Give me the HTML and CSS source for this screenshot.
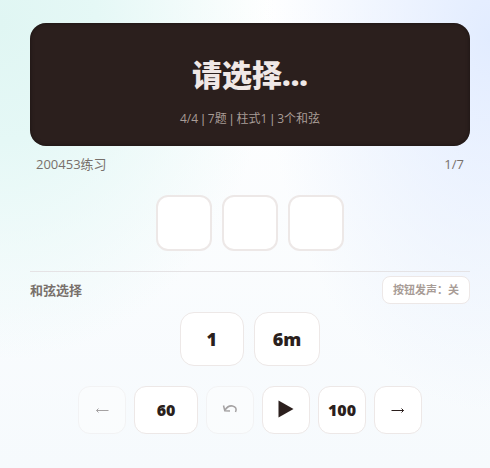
FILE: index.html
```html
<!DOCTYPE html>
<html lang="zh-CN">
<head>
    <meta charset="UTF-8">
    <meta name="viewport" content="width=device-width, initial-scale=1.0">
    <title>和弦练习</title>
    <link rel="stylesheet" href="styles.css">
</head>
<body>
    <main class="container">
        <header class="screen">
            <h1>请选择...</h1>
            <p>4/4<span class="sep"> | </span>7题<span class="sep"> | </span>柱式1<span class="sep"> | </span>3个和弦</p>
        </header>

        <div class="status">
            <span>200453练习</span>
            <span>1/7</span>
        </div>

        <!-- Answer slots -->
        <div class="slots">
            <div class="slot"></div>
            <div class="slot"></div>
            <div class="slot"></div>
        </div>

        <section class="picker">
            <div class="picker-header">
                <h2>和弦选择</h2>
                <button type="button" class="sound-toggle">按钮发声：关</button>
            </div>
            <div class="chords">
                <button type="button" class="chord">1</button>
                <button type="button" class="chord">6m</button>
            </div>
        </section>

        <div class="controls">
            <button type="button" class="control" aria-label="上一题" disabled>
                <svg width="14" height="8" viewBox="0 0 14 8"><path d="M13.500 4.500H1.500M3.500 2.500L1.500 4.500L3.500 6.500" fill="none" stroke="currentColor"/></svg>
            </button>
            <button type="button" class="control wide">60</button>
            <button type="button" class="control undo" aria-label="撤销" disabled>
                <svg width="16" height="10" viewBox="0 0 16 10"><path d="M3 6C5 3 8 1.500 10.500 2C14 2.700 14.800 5 13.500 8" fill="none" stroke="currentColor" stroke-width="1.500"/><path d="M1.500 1.500L2.800 6.700L8 7" fill="none" stroke="currentColor" stroke-width="1.500"/></svg>
            </button>
            <button type="button" class="control play" aria-label="播放">
                <svg width="16" height="18" viewBox="0 0 16 18"><path d="M0.500 0.500L15.500 9L0.500 17.500Z" fill="currentColor"/></svg>
            </button>
            <button type="button" class="control">100</button>
            <button type="button" class="control" aria-label="下一题">
                <svg width="14" height="8" viewBox="0 0 14 8"><path d="M0.500 4.500H12.500M10.500 2.500L12.500 4.500L10.500 6.500" fill="none" stroke="currentColor"/></svg>
            </button>
        </div>
    </main>
</body>
</html>
```
FILE: styles.css
```css
* {
    box-sizing: border-box;
}

body {
    margin: 0;
    min-height: 100vh;
    font-family: "Open Sans", "Noto Sans CJK SC", sans-serif;
    color: #2b1f1d;
    background:
        radial-gradient(56% 72% at 0% 5%, #e0f6f3 0%, #e5f8f6 35%, rgba(229, 248, 246, 0) 100%),
        radial-gradient(46% 80% at 100% 8%, #e2ecff 0%, rgba(226, 236, 255, 0) 100%),
        linear-gradient(#ffffff, #f6fafd);
}

.container {
    padding: 23px 20px 34px 30px;
}

.screen {
    padding: 34px 16px 16px;
    border-radius: 16px;
    background-color: #2b1f1d;
    box-shadow: inset 0 0 4px rgba(0, 0, 0, 0.4);
    text-align: center;
}

.screen h1 {
    margin: 0 0 14px;
    font-size: 30px;
    font-weight: 800;
    line-height: 36px;
    color: #f0e8e6;
}

.screen p {
    margin: 0;
    font-size: 12px;
    line-height: 23px;
    color: #a89c96;
}

.sep {
    font-family: "Liberation Sans", sans-serif;
    line-height: 1;
}

.status {
    display: flex;
    justify-content: space-between;
    padding: 8px 6px;
    font-size: 13px;
    line-height: 20px;
    color: #78706b;
}

.slots {
    display: flex;
    justify-content: center;
    gap: 10px;
    padding: 13px 0 20px;
}

.slot {
    width: 56px;
    height: 56px;
    border: 2px solid #ede8e7;
    border-radius: 12px;
    background-color: #ffffff;
}

.picker {
    border-top: 1px solid #e5e3e5;
}

.picker-header {
    display: flex;
    justify-content: space-between;
    align-items: center;
    padding: 4px 0 8px;
}

.picker-header h2 {
    margin: 0;
    font-size: 13px;
    line-height: 20px;
    color: #78706b;
}

button {
    padding: 0;
    border: 1px solid #ede8e7;
    background-color: #ffffff;
    color: #2b1f1d;
    font-family: inherit;
    font-weight: 800;
    cursor: pointer;
}

.sound-toggle {
    padding: 0 10px;
    border-radius: 8px;
    font-size: 11px;
    font-weight: 700;
    line-height: 26px;
    color: #a89c96;
}

.chords,
.controls {
    display: flex;
    justify-content: center;
}

.chords {
    gap: 10px;
}

.chord {
    min-width: 64px;
    height: 54px;
    padding: 0 18px;
    border-radius: 14px;
    font-size: 18px;
}

.controls {
    gap: 8px;
    margin-top: 20px;
}

.control {
    display: flex;
    justify-content: center;
    align-items: center;
    width: 48px;
    height: 48px;
    border-radius: 12px;
    font-size: 16px;
}

.control.wide {
    width: 64px;
}

.control:disabled {
    opacity: 0.4;
    cursor: default;
}

.undo,
.play {
    padding-bottom: 2px;
}
```
